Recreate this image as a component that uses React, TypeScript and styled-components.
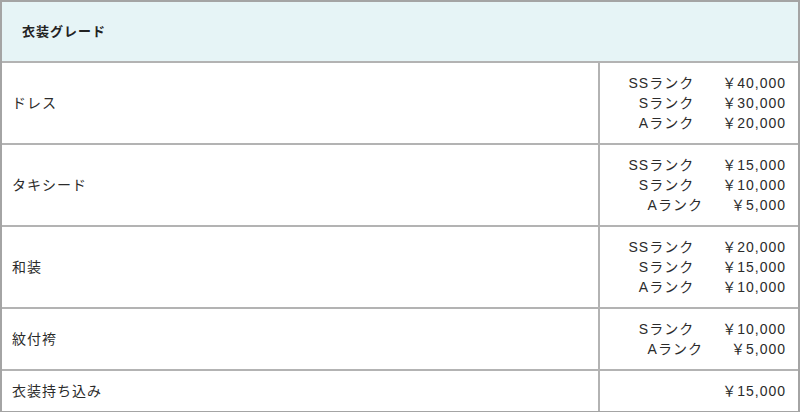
import React from 'react';
import styled, { createGlobalStyle } from 'styled-components';

const GlobalStyle = createGlobalStyle`
  html, body {
    margin: 0;
    padding: 0;
    background: #fff;
  }
  body {
    font-family: 'Liberation Sans', 'Noto Sans CJK JP', sans-serif;
    color: #2b2b2b;
  }
`;

const Wrapper = styled.div`
  width: 800px;
  box-sizing: border-box;
  border: 2px solid #a4a4a4;
  border-bottom-width: 1px;
`;

const Table = styled.table`
  width: 100%;
  table-layout: fixed;
  border-collapse: collapse;
  border-style: hidden;
  font-size: 14px;
  line-height: 20px;
  letter-spacing: 1px;
`;

const HeadCell = styled.th`
  background-color: #e6f4f6;
  border: 2px solid #b3b3b3;
  padding: 20px 20px 19px;
  text-align: left;
  font-size: 13px;
  font-weight: bold;
  color: #222;
`;

const NameCell = styled.td`
  border: 2px solid #b3b3b3;
  padding: 10px 10px;
  vertical-align: middle;
`;

const PriceCell = styled.td`
  border: 2px solid #b3b3b3;
  padding: 10px 12px 10px 10px;
  vertical-align: middle;
  text-align: right;
`;

const PriceLine = styled.div`
  white-space: nowrap;
`;

const Price = styled.span`
  display: inline-block;
  margin-left: 28px;
`;

type Item = { name: string; prices: [string, string][] };

const items: Item[] = [
  { name: 'ドレス', prices: [['SSランク', '40,000'], ['Sランク', '30,000'], ['Aランク', '20,000']] },
  { name: 'タキシード', prices: [['SSランク', '15,000'], ['Sランク', '10,000'], ['Aランク', '5,000']] },
  { name: '和装', prices: [['SSランク', '20,000'], ['Sランク', '15,000'], ['Aランク', '10,000']] },
  { name: '紋付袴', prices: [['Sランク', '10,000'], ['Aランク', '5,000']] },
  { name: '衣装持ち込み', prices: [['', '15,000']] },
];

const App = () => {
  return (
    <>
      <GlobalStyle />
      <Wrapper>
        <Table>
          <colgroup>
            <col style={{ width: 597 }} />
            <col />
          </colgroup>
          <thead>
            <tr>
              <HeadCell colSpan={2}>衣装グレード</HeadCell>
            </tr>
          </thead>
          <tbody>
            {items.map((item) => (
              <tr key={item.name}>
                <NameCell>{item.name}</NameCell>
                <PriceCell>
                  {item.prices.map(([grade, price]) => (
                    <PriceLine key={grade + price}>
                      {grade}
                      <Price>￥{price}</Price>
                    </PriceLine>
                  ))}
                </PriceCell>
              </tr>
            ))}
          </tbody>
        </Table>
      </Wrapper>
    </>
  );
};

export default App;
